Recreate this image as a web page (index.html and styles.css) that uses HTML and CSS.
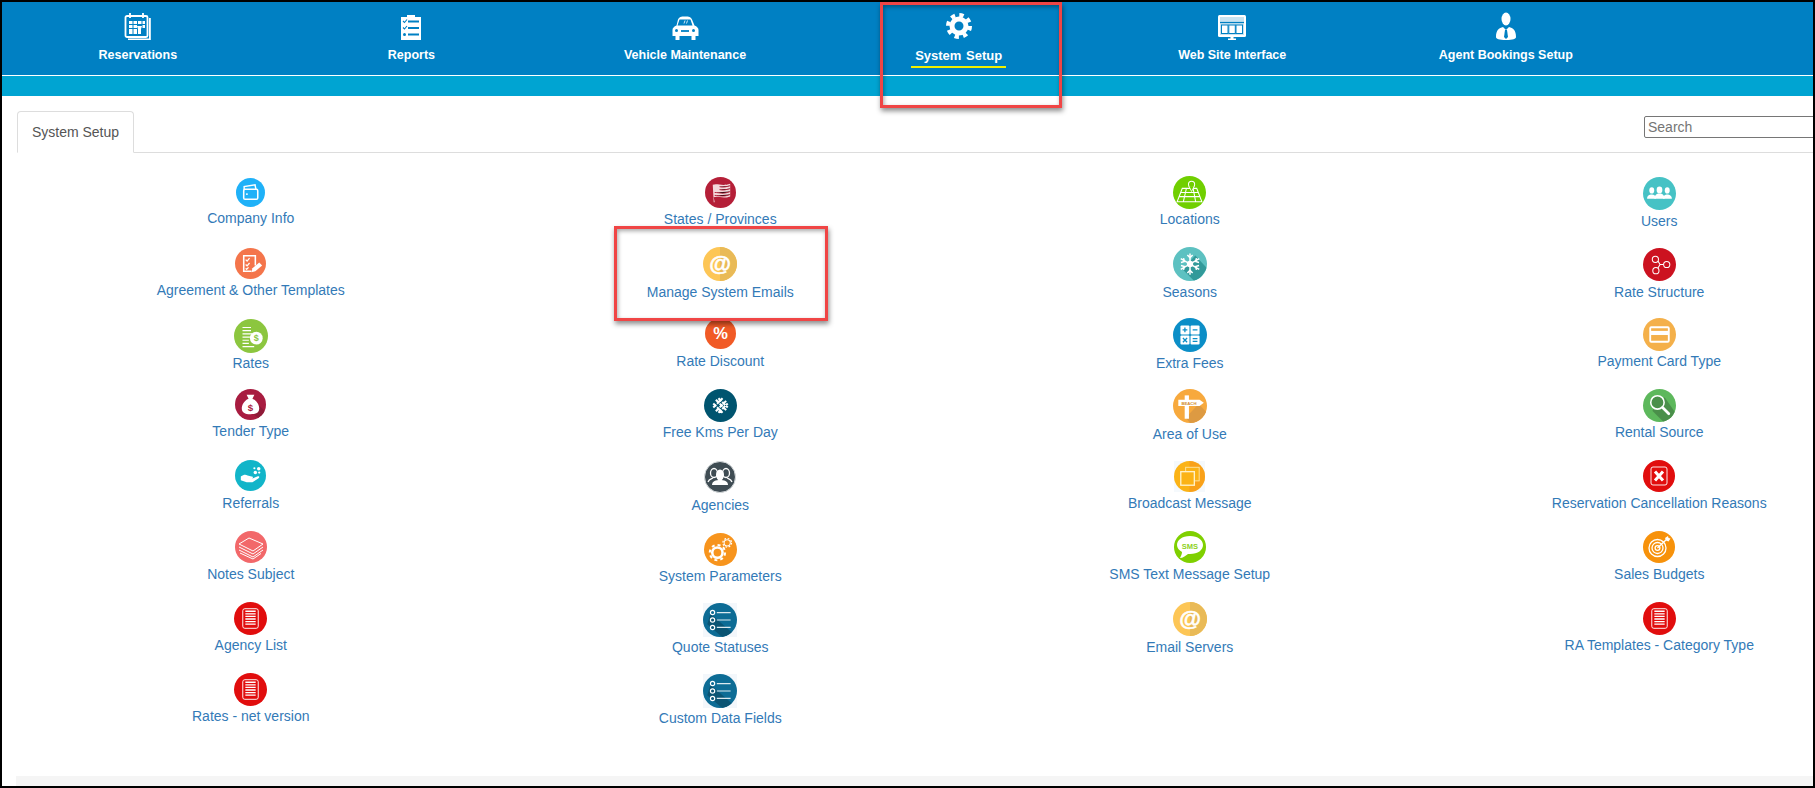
FILE: index.html
```html
<!DOCTYPE html>
<html lang="en">
<head>
<meta charset="utf-8">
<title>System Setup</title>
<link rel="stylesheet" href="styles.css">
</head>
<body>
<svg class="sprite" xmlns="http://www.w3.org/2000/svg" aria-hidden="true">
<defs>
<clipPath id="disc"><circle cx="16" cy="16" r="16"/></clipPath>
<symbol id="i-company" viewBox="0 0 32 32"><circle cx="16" cy="16" r="16" fill="#1fb1f8"/><path d="M9 13V9.500L21 7.500l1 5" fill="none" stroke="#fff" stroke-width="1.600"/><rect x="8.500" y="12.500" width="15.500" height="11" rx="1.500" fill="none" stroke="#fff" stroke-width="1.700"/><rect x="11" y="17" width="2" height="1.600" fill="#fff"/></symbol>
<symbol id="i-agreement" viewBox="0 0 32 32"><circle cx="16" cy="16" r="16" fill="#f4754b"/><path d="M21 18V8H9v16h8" fill="none" stroke="#fff" stroke-width="1.600"/><path d="M11 12l1.500 1.500 2.500-3M11 17l1.500 1.500 2.500-3M11 21l1 1 2-2" fill="none" stroke="#fff" stroke-width="1.300"/><path d="M17 25l1-4 7-6 3 3-7 6z" fill="#fff"/></symbol>
<symbol id="i-rates" viewBox="0 0 32 32"><circle cx="16" cy="16" r="16" fill="#8cc63f"/><path d="M8 8h8M8 11h8M8 14h9M8 17h7M8 20h6M8 23h6M8 26h11" stroke="#fff" stroke-width="1.100"/><circle cx="21" cy="18" r="6" fill="#fff"/><text x="21" y="21" class="glyph" font-size="8.500" fill="#8cc63f">$</text></symbol>
<symbol id="i-tender" viewBox="0 0 32 32"><circle cx="16" cy="16" r="16" fill="#a81c40"/><path d="M16 8L32 24 24 30 9 18z" fill="#8f1a38" clip-path="url(#disc)"/><path d="M12 6h8l-2 4c5 2 7 7 7 10 0 4-3 6-9 6s-9-2-9-6c0-3 2-8 7-10z" fill="#fff"/><text x="16" y="23" class="glyph" font-size="10" fill="#a81c40">$</text></symbol>
<symbol id="i-referrals" viewBox="0 0 32 32"><circle cx="16" cy="16" r="16" fill="#12b5c9"/><path d="M6 17c3-2 5-2 7-1l4 1c2 0 2 2 0 2h-4 5l5-2c2-1 3 1 1 2l-6 4H12l-6-2z" fill="#fff"/><circle cx="21" cy="13" r="1.800" fill="#fff"/><circle cx="24.500" cy="9" r="1.800" fill="#fff"/><circle cx="20" cy="8.500" r="1.100" fill="#fff"/><circle cx="25" cy="13" r="1.200" fill="#fff"/></symbol>
<symbol id="i-notes" viewBox="0 0 32 32"><circle cx="16" cy="16" r="16" fill="#f2686a"/><path d="M4 13l10-6 14 6-10 7z" fill="#f2686a" stroke="#fff" stroke-width="1"/><path d="M4 16l14 7 10-7M4 19l14 7 10-7M5 22l13 6 8-5.500" fill="none" stroke="#fff" stroke-width="1"/></symbol>
<symbol id="i-doc" viewBox="0 0 32 32"><circle cx="16" cy="16" r="16" fill="#e10d0d"/><rect x="8.500" y="6.500" width="15" height="19" rx="2" fill="none" stroke="#fff" stroke-width=".9"/><path d="M11 9h10M11 11.500h10M11 14h10M11 16.500h10M11 19h10M11 21.500h10" stroke="#fff" stroke-width="1.300"/></symbol>
<symbol id="i-flag" viewBox="0 0 32 32"><circle cx="16" cy="16" r="16" fill="#b51f38"/><path d="M8 8c5-2 9 2 18-1v13c-8 3-13-1-17 1l1 5H9z" fill="#f4d9dc"/><path d="M15 10c4 1 7 0 11-1M15 13c4 1 7 0 11-1M10 16c5 0 9 2 16-1M10 19c5 0 9 2 16-1" stroke="#b51f38" stroke-width="1"/></symbol>
<symbol id="i-at" viewBox="0 0 32 32"><circle cx="16" cy="16" r="16" fill="#fdc656"/><path d="M16 0a16 16 0 0 1 0 32z" fill="#e9ba57"/><text x="16" y="23" class="glyph" font-size="21" fill="#fff" stroke="#fff" stroke-width=".5">@</text></symbol>
<symbol id="i-discount" viewBox="0 0 32 32"><circle cx="16" cy="16" r="16" fill="#f15a26"/><text x="16" y="22" class="glyph" font-size="17" fill="#fff">%</text></symbol>
<symbol id="i-kms" viewBox="0 0 32 32"><circle cx="16" cy="16" r="16" fill="#00546f"/><path d="M9 14l9 9M11.500 10.500l10 10M14 9l9 9M9 18L18 9M11.500 21.500l10-10M14 23l9-9" stroke="#fff" stroke-width="2" stroke-dasharray="4 1.200"/></symbol>
<symbol id="i-agencies" viewBox="0 0 32 32"><circle cx="16" cy="16" r="15.500" fill="#3f4c53" stroke="#d7dbdd"/><ellipse cx="10" cy="12" rx="3.500" ry="4.500" fill="none" stroke="#fff" stroke-width="1.300"/><ellipse cx="22" cy="12" rx="3.500" ry="4.500" fill="none" stroke="#fff" stroke-width="1.300"/><path d="M4 21c1-3 3-3 5-4M28 21c-1-3-3-3-5-4" fill="none" stroke="#fff" stroke-width="1.300"/><ellipse cx="16" cy="14" rx="4" ry="5.500" fill="#fff"/><path d="M8 24c0-4 4-5 8-5s8 1 8 5z" fill="#fff"/></symbol>
<symbol id="i-params" viewBox="0 0 32 32"><circle cx="16" cy="16" r="16" fill="#f7941d"/><circle cx="13" cy="19" r="5" fill="none" stroke="#fff" stroke-width="2.500"/><circle cx="13" cy="19" r="7.400" fill="none" stroke="#fff" stroke-width="2" stroke-dasharray="2.900 2.900"/><circle cx="22.500" cy="9.500" r="3" fill="none" stroke="#fff" stroke-width="1"/><circle cx="22.500" cy="9.500" r="4.200" fill="none" stroke="#fff" stroke-width="1.200" stroke-dasharray="1.650 1.650"/></symbol>
<symbol id="i-list" viewBox="0 0 32 32"><rect width="32" height="32" fill="#f3f7fb"/><circle cx="16" cy="16" r="16" fill="#0d6c95"/><path d="M7 10L30 30 18 32 4 20z" fill="#0a5473" clip-path="url(#disc)"/><circle cx="9" cy="9" r="2" fill="none" stroke="#fff" stroke-width="1.100"/><circle cx="9" cy="16" r="2" fill="none" stroke="#fff" stroke-width="1.100"/><circle cx="9" cy="23" r="2" fill="none" stroke="#fff" stroke-width="1.100"/><path d="M13 9h13M13 16h13M13 23h13" stroke="#dbe9ef" stroke-width="1.100"/></symbol>
<symbol id="i-locations" viewBox="0 0 32 32"><circle cx="16" cy="16" r="16" fill="#70cf00"/><path d="M9 12h14l5 13H4zM7 16h18M5.500 20h21M13 12l-3 13M19.500 12l2.500 13" fill="none" stroke="#fff" stroke-width="1"/><circle cx="18" cy="8" r="3" fill="#70cf00" stroke="#fff"/><path d="M15.500 10l2.500 5 2.500-5" fill="#70cf00" stroke="#fff" stroke-width=".8"/></symbol>
<symbol id="i-seasons" viewBox="0 0 32 32"><circle cx="16" cy="16" r="16" fill="#5dc1c1"/><path d="M9 21L21 8l11 12-8 12h-4z" fill="#329a9a" clip-path="url(#disc)"/><g stroke="#fff" stroke-width="1.400" fill="none"><path d="M16 6v20M7.300 11l17.400 10M7.300 21l17.400-10"/><path d="M13.500 7.500L16 10l2.500-2.500M13.500 24.500L16 22l2.500 2.500M7.500 14.500l3.200-.8-.8-3.200M24.500 17.500l-3.200.8.800 3.200M7.500 17.500l3.200.8-.8 3.200M24.500 14.500l-3.200-.8.800-3.200"/></g><circle cx="16" cy="16" r="3" fill="#fff"/></symbol>
<symbol id="i-extra" viewBox="0 0 32 32"><circle cx="16" cy="16" r="16" fill="#0b8ec7"/><rect x="7" y="7" width="8.500" height="8.500" rx="1" fill="#fff"/><rect x="16.500" y="7" width="8.500" height="8.500" rx="1" fill="#fff"/><rect x="7" y="16.500" width="8.500" height="8.500" rx="1" fill="#fff"/><rect x="16.500" y="16.500" width="8.500" height="8.500" rx="1" fill="#fff"/><path d="M9 11.200h4.500M11.200 9v4.500M18.500 11.200h4.500M18.500 19.500h4.500M18.500 22h4.500M9.300 18.800l4 4M13.300 18.800l-4 4" stroke="#0b8ec7" stroke-width="1.200"/></symbol>
<symbol id="i-area" viewBox="0 0 32 32"><circle cx="16" cy="16" r="16" fill="#f7a93d"/><path d="M12 27L24 14l8 8-6 10H16z" fill="#dd9a42" clip-path="url(#disc)"/><rect x="11" y="6" width="4" height="22" fill="#fff"/><path d="M5 10h20l4 3-4 3H5z" fill="#fff"/><text x="15" y="14.800" class="glyph" font-size="4" fill="#d28a2e">BEACH</text></symbol>
<symbol id="i-broadcast" viewBox="0 0 32 32"><rect width="32" height="32" fill="#f5f9fc"/><circle cx="16" cy="16" r="16" fill="#fbb316"/><path d="M16 0a16 16 0 0 1 0 32z" fill="#f8951d" opacity=".6"/><rect x="12" y="6.500" width="14" height="14" fill="#fbb316" stroke="#fde39c" stroke-width="1"/><rect x="7" y="11" width="14" height="14" fill="#fbb316" stroke="#fff1c8" stroke-width="1.400"/></symbol>
<symbol id="i-sms" viewBox="0 0 32 32"><circle cx="16" cy="16" r="16" fill="#7fd000"/><path d="M16 5c8 0 13 4 13 9s-5 9-13 9h-2c-3 2-5 4-8 4 1-2 2-4 2-6-3-2-5-4-5-7 0-5 5-9 13-9z" fill="#fff"/><text x="16" y="17.500" class="glyph" font-size="7.500" fill="#8ed11e">SMS</text></symbol>
<symbol id="i-users" viewBox="0 0 32 32"><circle cx="16" cy="16" r="16" fill="#46c2c5"/><g fill="#fff"><ellipse cx="8.500" cy="13" rx="2.400" ry="3"/><ellipse cx="23.500" cy="13" rx="2.400" ry="3"/><path d="M4 21c0-3 2-4 4.500-4s4 1 4 4zM19.500 21c0-3 2-4 4-4s4.500 1 4.500 4z"/><ellipse cx="16" cy="12.500" rx="2.800" ry="3.300"/><path d="M11 21c0-3 2-5 5-5s5 2 5 5z"/></g></symbol>
<symbol id="i-structure" viewBox="0 0 32 32"><circle cx="16" cy="16" r="16" fill="#cc1220"/><g fill="none" stroke="#fff" stroke-width="1"><circle cx="12" cy="11" r="3"/><circle cx="23" cy="16" r="3"/><circle cx="12.500" cy="22" r="3"/><path d="M14.500 12.500l2 3.500H20M16.500 16l-2 3.500"/></g></symbol>
<symbol id="i-card" viewBox="0 0 32 32"><circle cx="16" cy="16" r="16" fill="#f4b04a"/><rect x="7" y="9" width="18" height="14" rx="1" fill="none" stroke="#fff" stroke-width="1.800"/><rect x="7" y="12.500" width="18" height="4" fill="#fff"/></symbol>
<symbol id="i-source" viewBox="0 0 32 32"><circle cx="16" cy="16" r="16" fill="#5db85c"/><path d="M9 21L21 8l11 16-8 8h-4z" fill="#4a8f4a" clip-path="url(#disc)"/><circle cx="14" cy="13" r="6.500" fill="#4a8f4a" stroke="#fff" stroke-width="1.500"/><path d="M19 18l6 6" stroke="#fff" stroke-width="2.600" stroke-linecap="round"/></symbol>
<symbol id="i-cancel" viewBox="0 0 32 32"><circle cx="16" cy="16" r="16" fill="#e10d0d"/><rect x="8" y="7" width="16" height="18" rx="2" fill="none" stroke="#fff" stroke-width=".9"/><path d="M12 11.500l8 9M20 11.500l-8 9" stroke="#fff" stroke-width="3"/></symbol>
<symbol id="i-target" viewBox="0 0 32 32"><circle cx="16" cy="16" r="16" fill="#f7920b"/><g fill="none" stroke="#fff"><circle cx="14.500" cy="17" r="8.500" stroke-width="1.300"/><circle cx="14.500" cy="17" r="5.500" stroke-width="1.300"/><circle cx="14.500" cy="17" r="2.400" stroke-width="1.300"/><path d="M14.500 17L25 7" stroke-width="1.300"/></g><path d="M22 7l3-2 .5 2 2 .5-2 3-2.500-1z" fill="#fff"/></symbol>
</defs>
</svg>

<div class="frame">
  <nav class="topnav">
    <a class="nav-item">
      <svg class="nav-icon" viewBox="0 0 32 28"><path d="M6 26.500h21V6h1.800v22H6z" fill="#fff"/><rect x="3.500" y="4" width="22" height="21" rx="1.500" fill="none" stroke="#fff" stroke-width="1.800"/><path d="M8 1v5M21 1v5" stroke="#fff" stroke-width="1.800"/><g fill="#fff"><rect x="7" y="9" width="3.500" height="3"/><rect x="11.500" y="9" width="3.500" height="3"/><rect x="16" y="9" width="3.500" height="3"/><rect x="20.500" y="9" width="2.500" height="3"/><rect x="7" y="13" width="3.500" height="3"/><rect x="11.500" y="13" width="3.500" height="3"/><rect x="20.500" y="13" width="2.500" height="3"/><rect x="7" y="17" width="3.500" height="5"/><rect x="11.500" y="17" width="3.500" height="5"/><path d="M15 14h5l-1 3v5h-3v-5z"/></g></svg>
      <span class="nav-label">Reservations</span>
    </a>
    <a class="nav-item">
      <svg class="nav-icon" viewBox="0 0 32 28"><path d="M6 5h6V3h8v2h6v23H6z" fill="#fff"/><g stroke="#0080c3" fill="none"><path d="M13 9.500h11M13 16h11M13 22.500h11" stroke-width="2"/><path d="M8 9l1.500 1.500L12 7.500M8 15.500L9.500 17 12 14" stroke-width="1.100"/></g><circle cx="9.500" cy="22.500" r="1.500" fill="#0080c3"/></svg>
      <span class="nav-label">Reports</span>
    </a>
    <a class="nav-item">
      <svg class="nav-icon" viewBox="0 0 32 28"><path d="M9 7.500C10 5 12 4.500 16 4.500s6 .5 7 3l2.500 6c2.500 1 4 2.500 4 4.500V24h-3v4h-4v-4H10.500v4h-4v-4h-3v-6c0-2 1.500-3.500 4-4.500z" fill="#fff"/><path d="M10.500 7.500h11l2 6h-15z" fill="#0080c3"/><path d="M15 11.500l1-3M17.500 11.500l1-3" stroke="#fff" stroke-width=".8"/><path d="M12 19h8" stroke="#0080c3" stroke-width="1.800"/><circle cx="7.500" cy="18.500" r="1.500" fill="#0080c3"/><circle cx="24.500" cy="18.500" r="1.500" fill="#0080c3"/></svg>
      <span class="nav-label">Vehicle Maintenance</span>
    </a>
    <a class="nav-item active">
      <svg class="nav-icon" viewBox="0 0 32 28"><circle cx="16" cy="14" r="7" fill="none" stroke="#fff" stroke-width="5"/><circle cx="16" cy="14" r="11" fill="none" stroke="#fff" stroke-width="4" stroke-dasharray="4.320 4.320"/></svg>
      <span class="nav-label">System Setup</span>
    </a>
    <a class="nav-item">
      <svg class="nav-icon" viewBox="0 0 32 28"><rect x="2" y="3" width="28" height="22" rx="1.500" fill="#fff"/><rect x="4" y="5" width="24" height="18" fill="#c8e3f1"/><path d="M4 10.500h24" stroke="#0080c3" stroke-width="1.200"/><g fill="#fff" stroke="#0080c3" stroke-width="1"><rect x="5.500" y="13" width="6.500" height="8.500"/><rect x="12.800" y="13" width="6.500" height="8.500"/><rect x="20" y="13" width="6.500" height="8.500"/></g><path d="M12 28h8v-1.500h-2.500V25h-3v1.500H12z" fill="#fff"/></svg>
      <span class="nav-label">Web Site Interface</span>
    </a>
    <a class="nav-item">
      <svg class="nav-icon" viewBox="0 0 32 28"><ellipse cx="16" cy="7" rx="4.500" ry="6.500" fill="#fff"/><path d="M6 25c0-7 3-9 7-10l3 3 3-3c4 1 7 3 7 10 0 2-3 3-10 3S6 27 6 25z" fill="#fff"/><path d="M15 18h2l1 7-2 2-2-2z" fill="#0080c3"/></svg>
      <span class="nav-label">Agent Bookings Setup</span>
    </a>
  </nav>
  <div class="subbar"></div>

  <main class="content">
    <div class="tabs">
      <a class="tab">System Setup</a>
      <input class="search" type="text" placeholder="Search">
    </div>
    <div class="grid">
      <div class="col">
        <a class="item o2"><svg class="s29"><use href="#i-company"/></svg><span>Company Info</span></a>
        <a class="item o1"><svg class="s31"><use href="#i-agreement"/></svg><span>Agreement &amp; Other Templates</span></a>
        <a class="item o1 g0"><svg class="s34"><use href="#i-rates"/></svg><span>Rates</span></a>
        <a class="item"><svg class="s31"><use href="#i-tender"/></svg><span>Tender Type</span></a>
        <a class="item g2"><svg class="s31"><use href="#i-referrals"/></svg><span>Referrals</span></a>
        <a class="item"><svg class="s32"><use href="#i-notes"/></svg><span>Notes Subject</span></a>
        <a class="item g0"><svg class="s33"><use href="#i-doc"/></svg><span>Agency List</span></a>
        <a class="item g0"><svg class="s33"><use href="#i-doc"/></svg><span>Rates - net version</span></a>
      </div>
      <div class="col">
        <a class="item o1"><svg class="s31"><use href="#i-flag"/></svg><span>States / Provinces</span></a>
        <a class="item"><svg class="s34"><use href="#i-at"/></svg><span>Manage System Emails</span></a>
        <a class="item g2"><svg class="s31"><use href="#i-discount"/></svg><span>Rate Discount</span></a>
        <a class="item g0"><svg class="s33"><use href="#i-kms"/></svg><span>Free Kms Per Day</span></a>
        <a class="item o1 g2"><svg class="s32"><use href="#i-agencies"/></svg><span>Agencies</span></a>
        <a class="item o2 g0"><svg class="s33"><use href="#i-params"/></svg><span>System Parameters</span></a>
        <a class="item o1 g0"><svg class="s34"><use href="#i-list"/></svg><span>Quote Statuses</span></a>
        <a class="item o1 g0"><svg class="s34"><use href="#i-list"/></svg><span>Custom Data Fields</span></a>
      </div>
      <div class="col">
        <a class="item g0"><svg class="s33"><use href="#i-locations"/></svg><span>Locations</span></a>
        <a class="item"><svg class="s34"><use href="#i-seasons"/></svg><span>Seasons</span></a>
        <a class="item"><svg class="s34"><use href="#i-extra"/></svg><span>Extra Fees</span></a>
        <a class="item"><svg class="s34"><use href="#i-area"/></svg><span>Area of Use</span></a>
        <a class="item o1"><svg class="s31"><use href="#i-broadcast"/></svg><span>Broadcast Message</span></a>
        <a class="item"><svg class="s32"><use href="#i-sms"/></svg><span>SMS Text Message Setup</span></a>
        <a class="item"><svg class="s34"><use href="#i-at"/></svg><span>Email Servers</span></a>
      </div>
      <div class="col">
        <a class="item o1"><svg class="s33"><use href="#i-users"/></svg><span>Users</span></a>
        <a class="item o1"><svg class="s33"><use href="#i-structure"/></svg><span>Rate Structure</span></a>
        <a class="item g0"><svg class="s33"><use href="#i-card"/></svg><span>Payment Card Type</span></a>
        <a class="item g0"><svg class="s33"><use href="#i-source"/></svg><span>Rental Source</span></a>
        <a class="item"><svg class="s32"><use href="#i-cancel"/></svg><span>Reservation Cancellation Reasons</span></a>
        <a class="item"><svg class="s32"><use href="#i-target"/></svg><span>Sales Budgets</span></a>
        <a class="item g0"><svg class="s33"><use href="#i-doc"/></svg><span>RA Templates - Category Type</span></a>
      </div>
    </div>
  </main>
  <div class="footer"></div>

  <div class="callout callout-nav"></div>
  <div class="callout callout-emails"></div>
</div>
</body>
</html>
```
FILE: styles.css
```css
* { box-sizing: border-box; }

html, body {
  margin: 0;
  height: 100%;
  overflow: hidden;
  background: #fff;
  font-family: "Liberation Sans", Arial, sans-serif;
}

.sprite { position: absolute; width: 0; height: 0; }

.glyph {
  font-family: "Liberation Sans", Arial, sans-serif;
  font-weight: 700;
  text-anchor: middle;
}

.frame {
  position: relative;
  width: 1815px;
  height: 788px;
  border: 2px solid #000;
  display: flex;
  flex-direction: column;
  overflow: hidden;
  background: #fff;
}

.topnav {
  display: flex;
  flex: none;
  height: 74px;
  background: #0080c3;
  border-bottom: 1px solid #fff;
  padding-top: 10px;
}

.nav-item {
  width: 273.7px;
  margin-left: -.1px;
  flex: none;
  display: flex;
  flex-direction: column;
  align-items: center;
  gap: 7px;
  color: #fff;
  text-decoration: none;
}

.nav-item:first-child { margin-left: -1px; }

.nav-icon { width: 32px; height: 28px; display: block; flex: none; }

.nav-label {
  padding: 0 4px 1px;
  font-size: 12.5px;
  font-weight: 700;
  line-height: 17px;
  border-bottom: 2px solid transparent;
  white-space: nowrap;
}

.active .nav-label {
  border-bottom-color: #f0f000;
  word-spacing: 1px;
  font-size: 13px;
  padding-bottom: 2px;
}

.subbar { flex: none; height: 20px; background: #00a4d2; }

.content { flex: 1; min-height: 0; padding: 15px 0 0 15px; }

.tabs {
  display: flex;
  align-items: flex-start;
  height: 42px;
  border-bottom: 1px solid #ddd;
}

.tab {
  flex: none;
  width: 117px;
  height: 42px;
  border: 1px solid #ddd;
  border-bottom-color: #fff;
  border-radius: 4px 4px 0 0;
  color: #555;
  font-size: 14px;
  line-height: 40px;
  text-align: center;
  white-space: nowrap;
}

.search {
  flex: none;
  width: 260px;
  height: 22px;
  margin: 5px 0 0 1510px;
  padding: 1px 3px;
  border: 1px solid #767676;
  border-radius: 2px;
  font-family: inherit;
  font-size: 14px;
}

.search::placeholder { color: #757575; opacity: 1; }

.grid {
  display: grid;
  grid-template-columns: repeat(4, 469.5px);
  margin: 23px 0 0 -1px;
  width: 1878px;
}

.col { display: flex; flex-direction: column; }

.item {
  height: 71px;
  display: flex;
  flex-direction: column;
  align-items: center;
  gap: 1px;
  color: #337ab7;
  font-size: 14px;
  line-height: 20px;
  white-space: nowrap;
}

.item.o1 { padding-top: 1px; }
.item.o2 { padding-top: 2px; }
.item.g0 { gap: 0; }
.item.g2 { gap: 2px; }

.item svg { display: block; flex: none; }

.s29 { width: 29px; height: 29px; }
.s31 { width: 31px; height: 31px; }
.s32 { width: 32px; height: 32px; }
.s33 { width: 33px; height: 33px; }
.s34 { width: 34px; height: 34px; }

.footer {
  flex: none;
  height: 10px;
  margin-left: 14px;
  background: #f5f5f5;
}

.callout {
  position: absolute;
  border: 3px solid #f04545;
  box-shadow: 1px 3px 5px rgba(0, 0, 0, .45), inset 1px 2px 4px rgba(0, 0, 0, .35);
  pointer-events: none;
}

.callout-nav { left: 878px; top: 0; width: 182px; height: 106px; }
.callout-emails { left: 612px; top: 224px; width: 214px; height: 95px; }
```
